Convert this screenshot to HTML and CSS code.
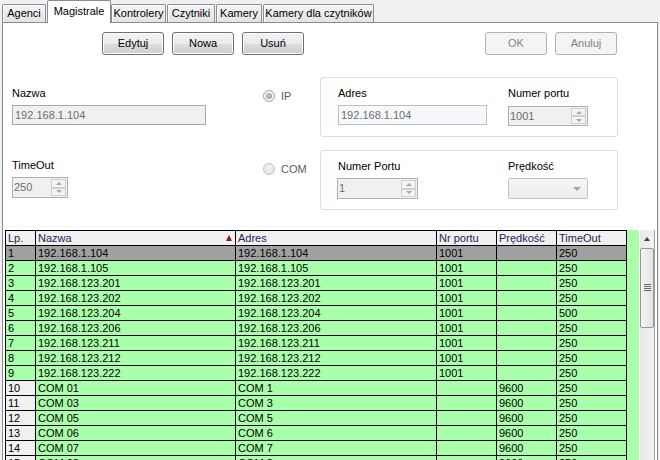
FILE: index.html
```html
<!DOCTYPE html>
<html>
<head>
<meta charset="utf-8">
<link rel="stylesheet" href="styles.css">
</head>
<body>
<div class="tabstrip">
  <div class="tab w-agenci">Agenci</div>
  <div class="tab active w-magistrale">Magistrale</div>
  <div class="tab w-kontrolery">Kontrolery</div>
  <div class="tab w-czytniki">Czytniki</div>
  <div class="tab w-kamery">Kamery</div>
  <div class="tab w-kamery-cz">Kamery dla czytników</div>
</div>
<div class="page">
  <div class="toolbar">
    <div class="btngroup">
      <div class="btn">Edytuj</div>
      <div class="btn">Nowa</div>
      <div class="btn">Usuń</div>
    </div>
    <div class="btngroup btngroup-right">
      <div class="btn disabled">OK</div>
      <div class="btn disabled">Anuluj</div>
    </div>
  </div>

  <div class="form">
    <div class="fcell fcell-r1">
      <div class="lbl">Nazwa</div>
      <div class="textbox tb-nazwa">192.168.1.104</div>
    </div>
    <div class="radiocell">
      <span class="radio checked"><span class="dot"></span></span><span class="rtext">IP</span>
    </div>
    <div class="group">
      <div class="gcol">
        <div class="lbl">Adres</div>
        <div class="textbox tb-adres">192.168.1.104</div>
      </div>
      <div class="gcol">
        <div class="lbl">Numer portu</div>
        <div class="num num-port num-shift">
          <div class="num-val">1001</div>
          <div class="spin"><div class="spin-btn"><span class="tri-up"></span></div><div class="spin-btn"><span class="tri-down"></span></div></div>
        </div>
      </div>
    </div>

    <div class="fcell fcell-r2">
      <div class="lbl">TimeOut</div>
      <div class="num num-timeout">
        <div class="num-val">250</div>
        <div class="spin"><div class="spin-btn"><span class="tri-up"></span></div><div class="spin-btn"><span class="tri-down"></span></div></div>
      </div>
    </div>
    <div class="radiocell">
      <span class="radio"></span><span class="rtext">COM</span>
    </div>
    <div class="group">
      <div class="gcol">
        <div class="lbl">Numer Portu</div>
        <div class="num num-com">
          <div class="num-val">1</div>
          <div class="spin"><div class="spin-btn"><span class="tri-up"></span></div><div class="spin-btn"><span class="tri-down"></span></div></div>
        </div>
      </div>
      <div class="gcol">
        <div class="lbl">Prędkość</div>
        <div class="combo"><span class="combo-arrow"></span></div>
      </div>
    </div>
  </div>

  <div class="gridwrap">
    <div class="dgv">
      <div class="row hdr">
        <div class="c">Lp.</div>
        <div class="c c-sort"><span>Nazwa</span><span class="sortarrow"></span></div>
        <div class="c">Adres</div>
        <div class="c">Nr portu</div>
        <div class="c">Prędkość</div>
        <div class="c">TimeOut</div>
      </div>
      <div class="row sel"><div class="c">1</div><div class="c">192.168.1.104</div><div class="c">192.168.1.104</div><div class="c">1001</div><div class="c"></div><div class="c">250</div></div>
      <div class="row"><div class="c">2</div><div class="c">192.168.1.105</div><div class="c">192.168.1.105</div><div class="c">1001</div><div class="c"></div><div class="c">250</div></div>
      <div class="row"><div class="c">3</div><div class="c">192.168.123.201</div><div class="c">192.168.123.201</div><div class="c">1001</div><div class="c"></div><div class="c">250</div></div>
      <div class="row"><div class="c">4</div><div class="c">192.168.123.202</div><div class="c">192.168.123.202</div><div class="c">1001</div><div class="c"></div><div class="c">250</div></div>
      <div class="row"><div class="c">5</div><div class="c">192.168.123.204</div><div class="c">192.168.123.204</div><div class="c">1001</div><div class="c"></div><div class="c">500</div></div>
      <div class="row"><div class="c">6</div><div class="c">192.168.123.206</div><div class="c">192.168.123.206</div><div class="c">1001</div><div class="c"></div><div class="c">250</div></div>
      <div class="row"><div class="c">7</div><div class="c">192.168.123.211</div><div class="c">192.168.123.211</div><div class="c">1001</div><div class="c"></div><div class="c">250</div></div>
      <div class="row"><div class="c">8</div><div class="c">192.168.123.212</div><div class="c">192.168.123.212</div><div class="c">1001</div><div class="c"></div><div class="c">250</div></div>
      <div class="row"><div class="c">9</div><div class="c">192.168.123.222</div><div class="c">192.168.123.222</div><div class="c">1001</div><div class="c"></div><div class="c">250</div></div>
      <div class="row com"><div class="c">10</div><div class="c">COM 01</div><div class="c">COM 1</div><div class="c"></div><div class="c">9600</div><div class="c">250</div></div>
      <div class="row com"><div class="c">11</div><div class="c">COM 03</div><div class="c">COM 3</div><div class="c"></div><div class="c">9600</div><div class="c">250</div></div>
      <div class="row com"><div class="c">12</div><div class="c">COM 05</div><div class="c">COM 5</div><div class="c"></div><div class="c">9600</div><div class="c">250</div></div>
      <div class="row com"><div class="c">13</div><div class="c">COM 06</div><div class="c">COM 6</div><div class="c"></div><div class="c">9600</div><div class="c">250</div></div>
      <div class="row com"><div class="c">14</div><div class="c">COM 07</div><div class="c">COM 7</div><div class="c"></div><div class="c">9600</div><div class="c">250</div></div>
      <div class="row com"><div class="c">15</div><div class="c">COM 08</div><div class="c">COM 8</div><div class="c"></div><div class="c">9600</div><div class="c">250</div></div>
    </div>
    <div class="filler"></div>
    <div class="vscroll">
      <div class="sb-up"><span class="sb-tri"></span></div>
      <div class="sb-thumb">
        <svg class="grip" width="7" height="8" viewBox="0 0 7 8"><path d="M0 0.5H7M0 2.5H7M0 4.5H7M0 6.5H7" stroke="#6a6a6a" stroke-width="1"/></svg>
      </div>
    </div>
  </div>
</div>
</body>
</html>
```
FILE: styles.css
```css
* { box-sizing: border-box; }
html, body { margin: 0; padding: 0; }
body {
  width: 660px; height: 460px; overflow: hidden;
  background: #f0f0f0;
  font-family: "Liberation Sans", Arial, sans-serif;
  font-size: 11px; line-height: 13px; color: #000;
}

/* tabs */
.tabstrip { display: flex; align-items: flex-end; height: 22px; padding-left: 2px; }
.tab {
  height: 18px; padding-top: 2px; margin-right: 1px;
  border: 1px solid #898c95; border-bottom: none; border-radius: 2px 2px 0 0;
  background: linear-gradient(#f5f5f5, #e3e3e3);
  box-shadow: inset 1px 1px 0 #fff;
  text-align: center; white-space: nowrap;
}
.tab.active {
  height: 23px; padding-top: 4px; margin-bottom: -1px; margin-right: 0;
  background: #fff; box-shadow: none; position: relative; z-index: 1;
}
.w-agenci { width: 44px; }
.w-magistrale { width: 64px; }
.w-kontrolery { width: 55px; }
.w-czytniki { width: 48px; }
.w-kamery { width: 46px; }
.w-kamery-cz { width: 111px; }

.page { margin: 0 2px; height: 520px; border: 1px solid #898c95; background: #fff; }

/* buttons */
.toolbar { display: flex; justify-content: space-between; padding: 9px 40px 0 99px; }
.btngroup { display: flex; gap: 8px; }
.btn {
  width: 62px; height: 23px; line-height: 21px; text-align: center;
  border: 1px solid #707070; border-radius: 3px;
  background: linear-gradient(#f2f2f2 0%, #ebebeb 50%, #dddddd 51%, #cfcfcf 100%);
  box-shadow: inset 0 0 0 1px #fcfcfc;
}
.btn.disabled {
  border-color: #adb2b5; background: #f4f4f4; color: #838383; box-shadow: none;
}

/* form */
.form {
  display: grid; grid-template-columns: 250px 58px 298px;
  grid-template-rows: 60px 60px; row-gap: 13px;
  margin-top: 22px; padding-left: 9px;
}
.fcell-r1 { padding-top: 10px; }
.fcell-r2 { padding-top: 9px; }
.lbl { height: 13px; white-space: nowrap; }
.textbox {
  height: 20px; margin-top: 5px; padding-left: 2px; line-height: 18px;
  color: #6d6d6d; white-space: nowrap;
}
.tb-nazwa { width: 194px; border: 1px solid #a9a9a9; background: #f0f0f0; }
.tb-adres { width: 149px; border: 1px solid #b6c0cb; background: #f6f8fb; }

.radiocell { display: flex; align-items: flex-start; gap: 6px; padding: 13px 0 0 1px; color: #5a5a5a; }
.rtext { line-height: 12px; padding-top: 0; }
.radio {
  width: 12px; height: 12px; border-radius: 50%;
  border: 1px solid #c2c2c2;
  background: radial-gradient(circle at 50% 40%, #f4f4f4, #dcdcdc);
  display: flex; align-items: center; justify-content: center; flex: none;
}
.radio.checked { border-color: #a6a6a6; background: radial-gradient(circle, #f7f7f7 55%, #d8d8d8); }
.radio .dot { width: 6px; height: 6px; border-radius: 50%; background: radial-gradient(circle at 40% 40%, #c8c8c8, #8e8e8e); }

.group {
  border: 1px solid #d5dfe5; border-radius: 3px;
  display: grid; grid-template-columns: 170px 1fr;
  padding: 9px 0 0 17px;
}

.num {
  display: flex; height: 21px; margin-top: 5px;
  border: 1px solid #b0b0b0; background: #f0f0f0; color: #6d6d6d;
}
.num-shift { margin-top: 6px; height: 20px; }
.num-val { flex: 1; padding-left: 1px; line-height: 18px; }
.spin { width: 16px; display: flex; flex-direction: column; padding: 1px 1px 1px 0; gap: 0; }
.spin-btn {
  flex: 1; border: 1px solid #cfcfcf; background: #f4f4f4;
  display: flex; align-items: center; justify-content: center;
}
.tri-up { width: 0; height: 0; border-left: 3px solid transparent; border-right: 3px solid transparent; border-bottom: 3px solid #a8a8a8; }
.tri-down { width: 0; height: 0; border-left: 3px solid transparent; border-right: 3px solid transparent; border-top: 3px solid #a8a8a8; }
.num-port { width: 80px; }
.num-timeout { width: 56px; }
.num-com { width: 81px; margin-left: -1px; }

.combo {
  width: 80px; height: 21px; margin-top: 5px;
  border: 1px solid #c3c3c3; border-radius: 2px;
  background: linear-gradient(#f6f6f6, #ececec);
  display: flex; align-items: center; justify-content: flex-end; padding-right: 6px;
}
.combo-arrow { width: 0; height: 0; border-left: 4px solid transparent; border-right: 4px solid transparent; border-top: 4px solid #a6a6a6; margin-top: 1px; }

/* grid */
.gridwrap { display: flex; margin: 20px 0 0 2px; height: 240px; border-right: 1px solid #a0a0a0; width: 650px; }
.dgv { border-left: 1px solid #000; border-top: 1px solid #000; width: 622px; }
.row { display: grid; grid-template-columns: 30px 200px 201px 60px 60px 70px; background: #aaffaa; }
.c {
  height: 15px; line-height: 14px; padding: 0 2px;
  border-right: 1px solid #000; border-bottom: 1px solid #000;
  white-space: nowrap; overflow: hidden; color: #000;
}
.row.hdr { background: #f0f0f0; }
.row.hdr .c { color: #24205a; }
.c-sort { display: flex; align-items: center; justify-content: space-between; padding-right: 3px; }
.sortarrow { width: 0; height: 0; border-left: 3.5px solid transparent; border-right: 3.5px solid transparent; border-bottom: 6px solid #8e1616; margin-top: -1px; }
.row.sel { background: #a0a0a0; }
.row.com .c:first-child { background: #f0f0f0; }

.filler { width: 12px; background: #aaffaa; }
.vscroll { width: 15px; border-left: 1px solid #fff; background: linear-gradient(to right, #e8e8e8, #f2f2f2); }
.sb-up { height: 17px; display: flex; align-items: center; justify-content: center; }
.sb-tri { width: 0; height: 0; border-left: 3.5px solid transparent; border-right: 3.5px solid transparent; border-bottom: 4px solid #404040; }
.sb-thumb {
  height: 80px; margin-top: 1px;
  border: 1px solid #979797; border-radius: 2px;
  background: linear-gradient(to right, #f4f4f4, #e2e2e2);
  display: flex; align-items: center; justify-content: center;
}
.grip { display: block; }
```
